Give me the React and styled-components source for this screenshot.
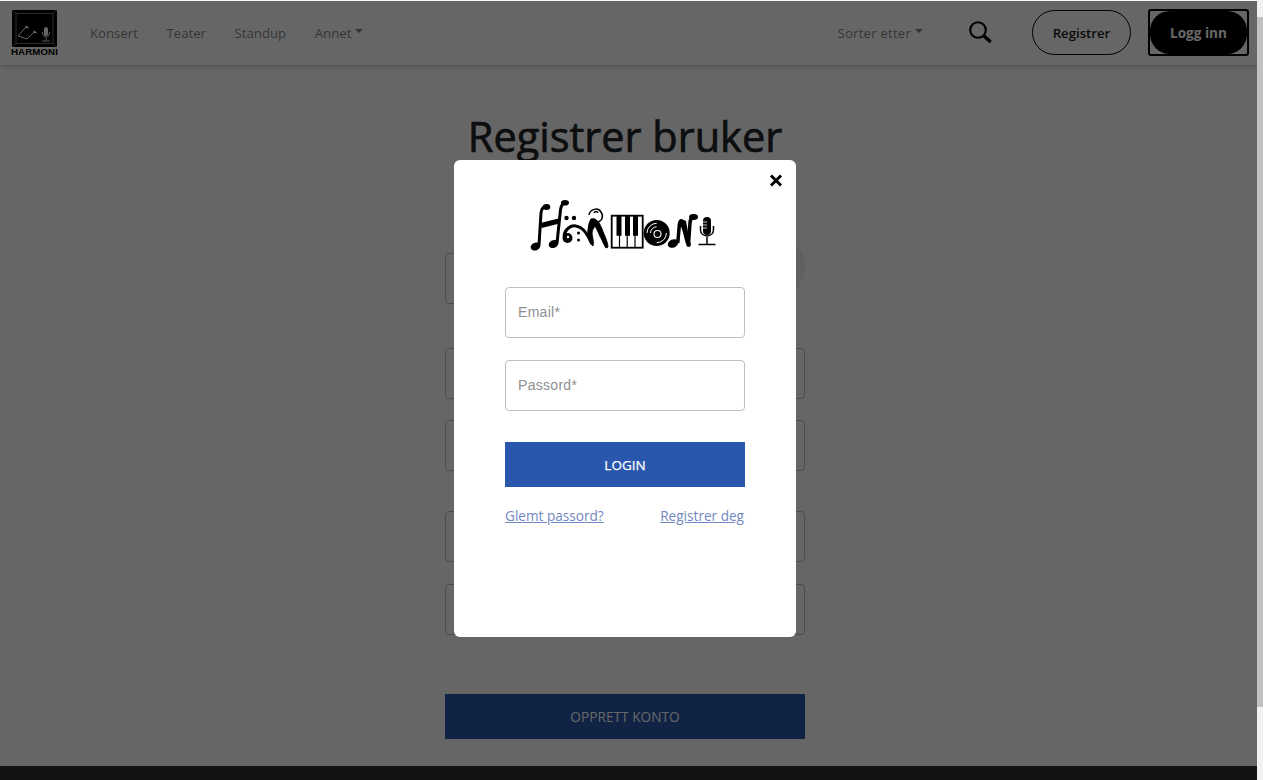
import React from "react";
import styled, { createGlobalStyle } from "styled-components";

const Global = createGlobalStyle`
  html, body { margin: 0; padding: 0; height: 100%; overflow: hidden; background: #f1f1f1; }
  #root { height: 780px; }
  * { box-sizing: border-box; }
`;

const FONT = `"Open Sans", "Noto Sans", "Liberation Sans", sans-serif`;

const Screen = styled.div`
  display: flex;
  width: 1263px;
  height: 780px;
  font-family: ${FONT};
`;
const Page = styled.div`
  position: relative;
  width: 1257px;
  height: 780px;
  background: #fff;
  overflow: hidden;
  display: flex;
  flex-direction: column;
`;
const Scrollbar = styled.div`
  width: 6px;
  background: #f1f1f1;
  padding-top: 17px;
`;
const Thumb = styled.div`
  height: 690px;
  background: #c1c1c1;
`;
const Nav = styled.nav`
  height: 64px;
  margin-top: 1px;
  flex: none;
  display: flex;
  align-items: center;
  background: #fff;
  box-shadow: 0 2px 4px rgba(0, 0, 0, 0.2);
  padding: 0 8px 1px 11px;
  position: relative;
`;
const LogoBox = styled.div`
  width: 47px;
  display: flex;
  flex-direction: column;
  align-items: center;
`;
const LogoCaption = styled.span`
  font: 700 9.7px/9px "Liberation Sans", Arial, sans-serif;
  color: #000;
  letter-spacing: 0.1px;
  white-space: nowrap;
`;
const NavLinks = styled.div`
  display: flex;
  margin-left: 32px;
  gap: 28.6px;
  align-items: center;
  flex: 1;
`;
const NavLink = styled.a`
  font-size: 13.2px;
  color: rgba(0, 0, 0, 0.5);
  display: inline-flex;
  align-items: center;
`;
const SortLink = styled(NavLink)`
  letter-spacing: 0.2px;
`;
const Caret = styled.i`
  display: inline-block;
  margin-left: 4px;
  margin-top: -4px;
  border-top: 4.5px solid rgba(0, 0, 0, 0.5);
  border-left: 4.5px solid transparent;
  border-right: 4.5px solid transparent;
`;
const SearchIcon = styled.svg`
  width: 25px;
  height: 25px;
  margin-left: 45px;
  margin-right: 39px;
  display: block;
`;
const OutlineButton = styled.button`
  width: 99px;
  height: 45px;
  border: 1px solid #000;
  border-radius: 23px;
  background: #fff;
  font: 600 13.2px ${FONT};
  color: #1b1b1b;
  padding: 0;
`;
const SolidButton = styled.button`
  width: 101px;
  height: 47px;
  margin-left: 17px;
  border: 2px solid #000;
  border-radius: 3px;
  background: #fff;
  padding: 0;
  overflow: hidden;
  font: 700 13.6px ${FONT};
  color: #fff;
`;
const SolidFill = styled.span`
  display: flex;
  align-items: center;
  justify-content: center;
  height: 100%;
  background: #000;
  border-radius: 20px;
`;
const Main = styled.main`
  flex: 1;
  width: 360px;
  margin-left: 445px;
  display: flex;
  flex-direction: column;
`;
const Title = styled.h1`
  margin: 39px -20px 0;
  height: 65px;
  text-align: center;
  font-size: 41.5px;
  line-height: 64px;
  font-weight: 400;
  -webkit-text-stroke: 0.7px #212529;
  color: #212529;
  white-space: nowrap;
`;
const AvatarRow = styled.div`
  display: flex;
  justify-content: space-between;
  align-items: flex-start;
  margin-top: 65px;
  height: 66px;
`;
const BackInput = styled.div`
  height: 51px;
  width: ${(p) => p.$w || "100%"};
  border: 1px solid #bdbdbd;
  border-radius: 4px;
  margin-top: ${(p) => p.$mt || 0}px;
  flex: none;
`;
const Avatar = styled.div`
  width: 66px;
  height: 66px;
  border-radius: 50%;
  background: #efefef;
`;
const CreateButton = styled.div`
  height: 45px;
  margin-top: 59px;
  flex: none;
  background: #2957ad;
  color: #fff;
  font-size: 13.7px;
  display: flex;
  align-items: center;
  justify-content: center;
`;
const Footer = styled.footer`
  height: 14px;
  flex: none;
  background: #303030;
`;
const Spacer = styled.div`
  flex: 1;
`;
const Overlay = styled.div`
  position: absolute;
  inset: 1px 0 0 0;
  background: rgba(0, 0, 0, 0.6);
  display: flex;
  align-items: flex-start;
  justify-content: flex-start;
  padding: 159px 0 0 454px;
`;
const Modal = styled.div`
  position: relative;
  width: 342px;
  height: 477px;
  background: #fff;
  border-radius: 6px;
  padding: 40px 51px 0;
  display: flex;
  flex-direction: column;
`;
const Close = styled.svg`
  position: absolute;
  top: 14px;
  right: 13px;
  width: 14px;
  height: 13px;
`;
const ModalLogo = styled.svg`
  display: block;
  width: 188px;
  height: 52px;
  margin: 0 0 0 25px;
  flex: none;
`;
const Input = styled.input`
  display: block;
  height: 51px;
  width: 240px;
  border: 1px solid #bfbfbf;
  border-radius: 4px;
  padding: 0 12px 2px;
  font: 14px "Liberation Sans", Arial, sans-serif;
  letter-spacing: 0.3px;
  margin-top: ${(p) => p.$mt}px;
  flex: none;
  &::placeholder { color: #8f8f8f; opacity: 1; }
`;
const LoginButton = styled.button`
  height: 45px;
  margin-top: 31px;
  flex: none;
  border: 0;
  background: #2957ad;
  color: #fff;
  font: 400 13.5px ${FONT};
  -webkit-text-stroke: 0.25px #fff;
`;
const LinkRow = styled.div`
  display: flex;
  justify-content: space-between;
  margin-top: 19px;
  padding-right: 1px;
`;
const TextLink = styled.a`
  font-size: 13.6px;
  line-height: 19px;
  color: #7088c0;
  text-decoration: underline;
`;

export default function App() {
  return (
    <Screen>
      <Global />
      <Page>
        <Nav>
          <LogoBox>
            <svg width="45" height="37" viewBox="0 0 45 37">
              <rect width="45" height="37" fill="#000" />
              <path d="M0 0l4 3.500h37L45 0M0 37l4-3.500h37l4 3.500M4 3.500v30M41 3.500v30" fill="none" stroke="#8a8a8a" strokeWidth=".8" />
              <path d="M14 17L6 26l9 3 7-7M14 17l3 1M22 22l3 1" fill="none" stroke="#fff" strokeWidth="1" />
              <circle cx="14.500" cy="17" r="1.300" fill="#fff" />
              <circle cx="22.500" cy="22" r="1.300" fill="#fff" />
              <rect x="32" y="17" width="4" height="9" rx="2" fill="#fff" />
              <path d="M30.500 22c0 6.500 7 6.500 7 0M34 27.500v3M30 31h8" fill="none" stroke="#fff" strokeWidth=".9" />
            </svg>
            <LogoCaption>HARMONI</LogoCaption>
          </LogoBox>
          <NavLinks>
            <NavLink>Konsert</NavLink>
            <NavLink>Teater</NavLink>
            <NavLink>Standup</NavLink>
            <NavLink>
              Annet
              <Caret />
            </NavLink>
          </NavLinks>
          <SortLink>
            Sorter etter
            <Caret />
          </SortLink>
          <SearchIcon viewBox="0 0 25 25">
            <circle cx="10" cy="10" r="7.800" fill="none" stroke="#000" strokeWidth="2.100" />
            <path d="M15.500 15.500l7.200 6.500" stroke="#000" strokeWidth="3.400" />
          </SearchIcon>
          <OutlineButton>Registrer</OutlineButton>
          <SolidButton>
            <SolidFill>Logg inn</SolidFill>
          </SolidButton>
        </Nav>
        <Main>
          <Title>Registrer bruker</Title>
          <AvatarRow>
            <BackInput $w="200px" $mt={19} />
            <Avatar />
          </AvatarRow>
          <BackInput $mt={48} />
          <BackInput $mt={21} />
          <BackInput $mt={40} />
          <BackInput $mt={22} />
          <CreateButton>OPPRETT KONTO</CreateButton>
          <Spacer />
        </Main>
        <Footer />
        <Overlay>
          <Modal>
            <Close viewBox="0 0 14 13">
              <path d="M2 1.500l10 10M12 1.500l-10 10" stroke="#000" strokeWidth="3" />
            </Close>
            <ModalLogo viewBox="0 0 188 52">
              {/* H: two joined notes */}
              <g fill="#000">
                <ellipse cx="5.500" cy="46.500" rx="5" ry="3.800" transform="rotate(-25 5.500 46.500)" />
                <ellipse cx="23.500" cy="44" rx="5" ry="3.800" transform="rotate(-25 23.500 44)" />
                <ellipse cx="16.500" cy="7" rx="3.800" ry="3" />
                <ellipse cx="35" cy="2.800" rx="4" ry="2.800" />
              </g>
              <g fill="none" stroke="#000" strokeLinecap="round">
                <path d="M9 45l2-32c.3-4 2-6.500 6-6.500" strokeWidth="3" />
                <path d="M27 43l3.500-33c.5-4 2-7.500 6-7.500" strokeWidth="3" />
                <path d="M11 25.500l18-4.500" strokeWidth="5" strokeLinecap="butt" />
              </g>
              {/* A: dots and a bass clef */}
              <g fill="#000">
                <circle cx="36.500" cy="18" r="2.200" />
                <circle cx="44" cy="18" r="2.200" />
                <circle cx="37.500" cy="38" r="5" />
              </g>
              <path d="M34 36c1-7 7-11 12-10 7 1 10 7 13 12 1.500 3 2.500 5 3.500 6.500" fill="none" stroke="#000" strokeWidth="3" />
              <circle cx="38" cy="37" r="1.200" fill="#fff" />
              <g fill="#000">
                <circle cx="48.500" cy="33" r="1.500" />
                <circle cx="48.500" cy="40" r="1.500" />
              </g>
              {/* R: violin scroll */}
              <g fill="none" stroke="#000" strokeWidth="1.500">
                <path d="M59 15c1-6 9-8 12-3 3 4 1 9-3 10" />
                <path d="M64 13c1-2 3-2 4 0" />
              </g>
              <g fill="#000" stroke="#000" strokeWidth="1">
                <path d="M61 19c4-1 6 1 5 5-1 3-4 5-4 9 0 4 2 7 1 13-3-2-6-10-5-16 .5-4 1-8 3-11z" />
                <path d="M64 19c4 1 6 5 8 10 2 6 5 10 6 18l-2 1c-3-5-5-9-7-14-2-4-4-9-7-13z" />
              </g>
              <path d="M66 29l-2 5M70 38l3 7" stroke="#fff" strokeWidth=".8" />
              {/* Piano */}
              <rect x="81.700" y="15.700" width="31" height="32" fill="#fff" stroke="#000" strokeWidth="1.800" />
              <path d="M89.500 15.700v32M97.200 15.700v32M105 15.700v32" stroke="#000" strokeWidth="1.200" />
              <path d="M86.500 15.700h5v20h-5zM95 15.700h5v20h-5zM103 15.700h5v20h-5z" fill="#000" />
              {/* Vinyl */}
              <circle cx="126.700" cy="33" r="13" fill="#000" />
              <path d="M117 33a9.700 9.700 0 0 1 9.700-9.700M120.500 33a6.200 6.200 0 0 1 6.200-6.200M136.400 33a9.700 9.700 0 0 1-9.700 9.700" fill="none" stroke="#fff" strokeWidth="1" />
              <circle cx="127.500" cy="34" r="3.500" fill="none" stroke="#fff" strokeWidth="1.100" />
              {/* N: note */}
              <g fill="#000">
                <ellipse cx="143" cy="43.500" rx="5.500" ry="4" transform="rotate(-25 143 43.500)" />
                <ellipse cx="163.500" cy="17" rx="4.500" ry="3" />
                <path d="M146 43.500l1.500-18c.4-5 2-6.500 4-6.500l4.500 2c1.500 8 2.500 15 5 24l-1.500 2-2.500-.5c-3-8-3.500-14-6-20-.5 5-1 11-1.500 16.500z" />
              </g>
              <path d="M158.500 44l1.500-21c.3-4 2-6 5-6" fill="none" stroke="#000" strokeWidth="3.500" />
              {/* Microphone */}
              <rect x="173" y="17" width="8" height="18" rx="4" fill="#000" />
              <path d="M173 22h4M173 25h4M173 28h4" stroke="#fff" strokeWidth=".8" />
              <path d="M170.500 26v3.500c0 8.500 13 8.500 13 0V26M177 37v7M168.500 44.500h17" fill="none" stroke="#000" strokeWidth="1.500" />
            </ModalLogo>
            <Input $mt={35} placeholder="Email*" readOnly />
            <Input $mt={22} placeholder="Passord*" readOnly />
            <LoginButton>LOGIN</LoginButton>
            <LinkRow>
              <TextLink>Glemt passord?</TextLink>
              <TextLink>Registrer deg</TextLink>
            </LinkRow>
          </Modal>
        </Overlay>
      </Page>
      <Scrollbar>
        <Thumb />
      </Scrollbar>
    </Screen>
  );
}
